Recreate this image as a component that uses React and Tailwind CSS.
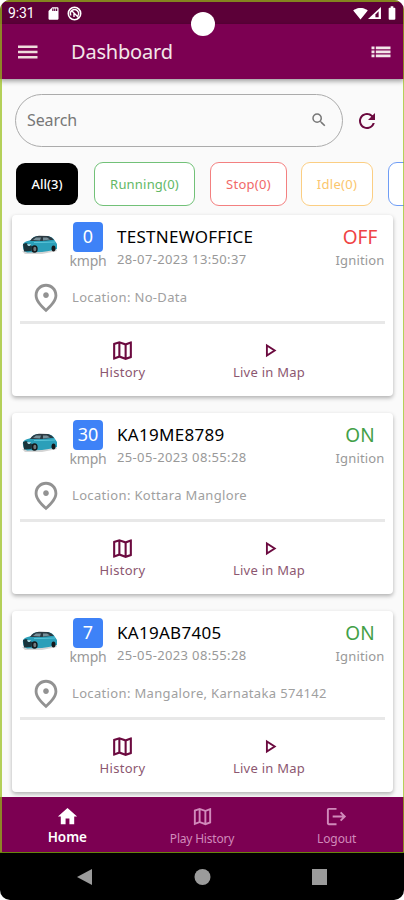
import {
  MdBatteryFull,
  MdHome,
  MdLogout,
  MdOutlineMap,
  MdOutlinePlace,
  MdRefresh,
  MdSdCard,
  MdSearch,
  MdSignalWifi4Bar,
} from "react-icons/md"

const vehicles = [
  { name: "TESTNEWOFFICE", speed: 0, time: "28-07-2023 13:50:37", on: false, location: "No-Data" },
  { name: "KA19ME8789", speed: 30, time: "25-05-2023 08:55:28", on: true, location: "Kottara Manglore" },
  { name: "KA19AB7405", speed: 7, time: "25-05-2023 08:55:28", on: true, location: "Mangalore, Karnataka 574142" },
]

const Car = () => (
  <svg width="36" height="20" viewBox="0 0 36 20">
    <path d="M0 16L30 16L34 14L35 16L20 19L3 19Z" fill="#d4d4d4" />
    <path d="M1 12Q0 8 4 6.5L9 5Q11 1 17 1L26 1Q31 2 33 6L35 9L35 14L30 15.5L20 17L5 17.5Q1 16 1 12Z" fill="#2b9fb9" />
    <path d="M8 6Q11 1 17 0.8L26 1Q30 2 32 5L29 5L20 6Z" fill="#2c3a42" />
    <path d="M11 5L14 2.5L19 2.4L18 5.5ZM21 2.5L25 2.5L28 4.5L21 5.5Z" fill="#77909a" />
    <path d="M12 7.5L19 7.5L33 7" stroke="#58c3d7" strokeWidth="1.2" fill="none" />
    <path d="M1 9L4 8L10 11L9 16L2 16.5Z" fill="#18333b" />
    <ellipse cx="12.5" cy="14" rx="3.2" ry="3.8" fill="#15191c" />
    <ellipse cx="12.8" cy="14" rx="1.5" ry="2.2" fill="#6f7a7e" />
    <ellipse cx="31.5" cy="13.5" rx="2" ry="3" fill="#15191c" />
    <path d="M5 9L9 9L8 11L6 11Z" fill="#9fd0da" />
  </svg>
)

const StatusBar = () => (
  <div className="flex h-6 shrink-0 items-center bg-[#5c0038] pt-0.5 pr-[4px] pl-2 text-white">
    <span className="w-[38px] font-[Roboto] text-[14px] leading-4 tracking-[-0.1px]">9:31</span>
    <MdSdCard size={15} />
    <svg width="15" height="15" viewBox="0 0 15 15" fill="none" stroke="white" className="ml-1.5">
      <circle cx="7.5" cy="7.5" r="6.2" strokeWidth="1.6" />
      <path d="M4 9.5A4 4 0 1 1 10.8 9.8M4.5 4.5L12 12M7 7L7 11" strokeWidth="1.4" />
    </svg>
    <div className="ml-auto flex items-center">
      <MdSignalWifi4Bar size={15} />
      <svg width="13" height="12" viewBox="0 0 14 13">
        <path d="M0 13L14 0V13Z" fill="white" />
        <path d="M8 8L11.5 4.5V11H8Z" fill="#5c0038" />
      </svg>
      <MdBatteryFull size={16} className="ml-[3px]" />
    </div>
  </div>
)

const Header = () => (
  <header className="z-10 flex h-[55px] shrink-0 items-center bg-[#7c0052] pr-[13px] pl-[18px] text-[#f3e6e9] shadow-[0_2px_5px_rgba(0,0,0,0.4)]">
    <svg width="20" height="14" viewBox="0 0 20 14" fill="#efdcdc">
      <path d="M0 0.5H19.5V3H0ZM0 5.7H19.5V8.2H0ZM0 11H19.5V13.5H0Z" />
    </svg>
    <h1 className="ml-[33px] text-[20px] leading-6 tracking-[-0.2px]">Dashboard</h1>
    <svg width="20" height="12" viewBox="0 0 20 12" fill="#f3e6e9" className="ml-auto">
      <path d="M0.5 0.5H3.5V3.3H0.5ZM4.8 0.5H19.5V3.3H4.8ZM0.5 4.5H3.5V7.3H0.5ZM4.8 4.5H19.5V7.3H4.8ZM0.5 8.5H3.5V11.3H0.5ZM4.8 8.5H19.5V11.3H4.8Z" />
    </svg>
  </header>
)

const SearchRow = () => (
  <div className="flex items-center pt-[15px] pl-[15px]">
    <div className="flex h-[53px] w-[328px] items-center justify-between rounded-full border border-[#ababab] pr-[14px] pb-px pl-[11px]">
      <span className="text-[16px] tracking-[-0.1px] text-[#777]">Search</span>
      <MdSearch size={18} className="text-[#777]" />
    </div>
    <MdRefresh size={24} className="ml-3 text-[#6b0a3f]" />
  </div>
)

const Filters = () => (
  <div className="mt-[15px] flex h-11 overflow-hidden pl-4 text-[13px] [&>span]:flex [&>span]:shrink-0 [&>span]:items-center [&>span]:justify-center [&>span]:rounded-[9px] [&>span]:pt-0.5">
    <span className="my-px w-[62px] bg-black font-medium text-white">All(3)</span>
    <span className="ml-4 w-[101px] border border-[#72c178] bg-white tracking-[0.2px] text-[#62b866]">Running(0)</span>
    <span className="ml-[15px] w-[77px] border border-[#f38080] bg-white tracking-[0.3px] text-[#f16868]">Stop(0)</span>
    <span className="ml-[14px] w-[72px] border border-[#fbce83] bg-white tracking-[0.3px] text-[#fbc66d]">Idle(0)</span>
    <span className="ml-[15px] w-[110px] border border-[#6f9df5] bg-white"></span>
  </div>
)

const VehicleCard = ({ vehicle }) => (
  <article className="h-[181px] shrink-0 rounded-[4px] bg-white shadow-[0_2px_4px_rgba(0,0,0,0.3)]">
    <div className="flex h-[60px] pt-[7px]">
      <div className="w-[55px] pt-[13px] pl-[10px]">
        <Car />
      </div>
      <div className="flex w-[42px] flex-col items-center">
        <div className="flex h-[30px] w-[30px] items-center justify-center rounded-[4px] bg-[#3e82f7] pb-px text-[18px] text-white">
          {vehicle.speed}
        </div>
        <span className="text-[14px] leading-[18px] tracking-[-0.2px] text-[#999]">kmph</span>
      </div>
      <div className="ml-2 flex flex-col pt-[3px]">
        <span className="text-[17px] leading-6 tracking-[0.28px] text-black">{vehicle.name}</span>
        <span className="text-[13px] leading-5 tracking-[0.35px] text-[#999]">{vehicle.time}</span>
      </div>
      <div className="mr-2 ml-auto flex w-[50px] flex-col items-center pt-[3px]">
        <span className={vehicle.on ? "text-[19px] leading-6 text-[#43a047]" : "text-[19px] leading-6 text-[#ef4444]"}>
          {vehicle.on ? "ON" : "OFF"}
        </span>
        <span className="text-[13px] leading-[22px] tracking-[0.15px] text-[#999]">Ignition</span>
      </div>
    </div>
    <div className="mx-2 flex h-[49px] items-center border-b-[3px] border-[#e8e8e8] pl-[9px]">
      <MdOutlinePlace size={34} className="text-[#929292]" />
      <span className="ml-[9px] text-[13px] tracking-[0.34px] text-[#a0a0a0]">Location: {vehicle.location}</span>
    </div>
    <div className="flex pt-[14px] text-[13px] leading-[18px] text-[#8c5770]">
      <div className="ml-[65px] flex w-[91px] flex-col items-center">
        <MdOutlineMap size={25} className="text-[#6b0a3f]" />
        <span className="tracking-[0.3px]">History</span>
      </div>
      <div className="ml-[51px] flex w-[100px] flex-col items-center">
        <svg width="25" height="25" viewBox="0 0 24 24" fill="none" stroke="#6b0a3f" strokeWidth="1.8">
          <path d="M9.5 7.2V16.8L17 12Z" />
        </svg>
        <span className="tracking-[0.25px]">Live in Map</span>
      </div>
    </div>
  </article>
)

const BottomNav = () => (
  <nav className="z-10 flex h-[55px] shrink-0 bg-[#7c0052] pt-2 text-[12px] leading-[22px] text-[#d18abb] [&>div]:flex [&>div]:flex-1 [&>div]:flex-col [&>div]:items-center">
    <div className="text-white">
      <MdHome size={23} />
      <span className="text-[13.5px] leading-[18px] font-semibold">Home</span>
    </div>
    <div>
      <MdOutlineMap size={23} />
      <span className="tracking-[-0.2px]">Play History</span>
    </div>
    <div>
      <MdLogout size={23} />
      <span className="tracking-[-0.1px]">Logout</span>
    </div>
  </nav>
)

const SystemNav = () => (
  <div className="flex h-12 shrink-0 items-center bg-black pt-[2px]">
    <svg width="404" height="20" viewBox="0 0 404 20" fill="#9b9b9b">
      <path d="M77 10L92 2V18Z" />
      <circle cx="202.5" cy="10" r="8" />
      <path d="M312 2H327V18H312Z" />
    </svg>
  </div>
)

export default function App() {
  return (
    <div className="h-[900px] w-[404px] bg-white font-['Noto_Sans',sans-serif]">
      <div className="relative flex h-full flex-col overflow-hidden rounded-[10px] bg-[#fafafa]">
        <StatusBar />
        <Header />
        <main className="min-h-0 flex-1 overflow-hidden">
          <SearchRow />
          <Filters />
          <div className="mt-[9px] mr-[11px] ml-3 flex flex-col gap-[17px]">
            {vehicles.map((vehicle) => (
              <VehicleCard key={vehicle.name} vehicle={vehicle} />
            ))}
          </div>
        </main>
        <BottomNav />
        <SystemNav />
        {/* Camera cutout */}
        <div className="absolute top-3 left-[191px] z-20 h-6 w-6 rounded-full bg-white"></div>
        {/* Screen outline */}
        <div className="pointer-events-none absolute inset-x-0 top-0 z-20 h-[853px] border border-t-2 border-l-2 border-[rgba(150,190,20,0.7)]"></div>
      </div>
    </div>
  )
}
